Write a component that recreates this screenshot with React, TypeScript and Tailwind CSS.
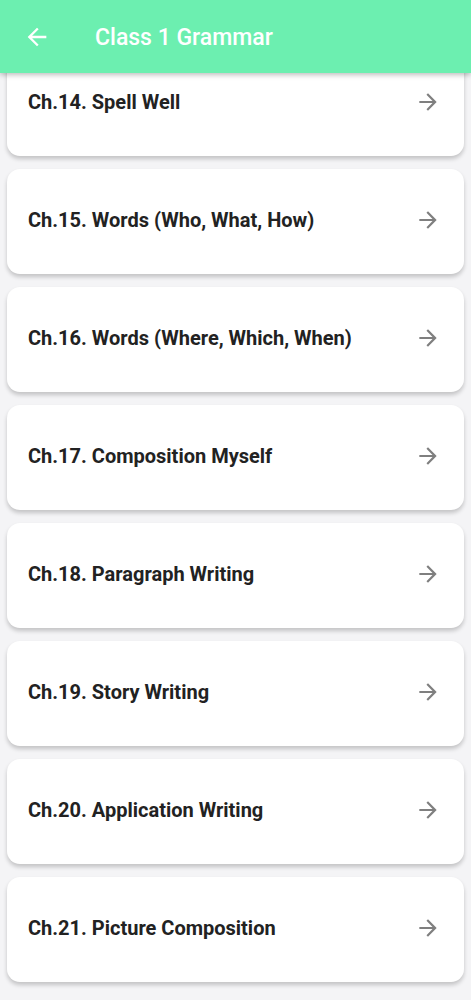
import React from "react";

const chapters = [
  "Ch.14. Spell Well",
  "Ch.15. Words (Who, What, How)",
  "Ch.16. Words (Where, Which, When)",
  "Ch.17. Composition Myself",
  "Ch.18. Paragraph Writing",
  "Ch.19. Story Writing",
  "Ch.20. Application Writing",
  "Ch.21. Picture Composition",
];

function Arrow({ className }: { className?: string }) {
  return (
    <svg viewBox="0 0 24 24" className={className} fill="currentColor">
      <path d="M12 4l-1.41 1.41L16.17 11H4v2h12.17l-5.58 5.59L12 20l8-8z" />
    </svg>
  );
}

function BackArrow({ className }: { className?: string }) {
  return (
    <svg viewBox="0 0 24 24" className={className} fill="currentColor">
      <path d="M20 11H7.83l5.59-5.59L12 4l-8 8 8 8 1.41-1.41L7.83 13H20v-2z" />
    </svg>
  );
}

export default function App() {
  return (
    <div
      className="relative w-[471px] h-[1000px] overflow-hidden bg-[#f4f4f6]"
      style={{ fontFamily: "Roboto, 'Noto Sans', sans-serif" }}
    >
      <div className="absolute top-0 left-0 right-0 z-10 h-[73px] bg-[#6cefb0] flex items-center shadow-[0_2px_5px_rgba(0,0,0,0.25)]">
        <BackArrow className="w-[28px] h-[28px] text-white ml-[23px]" />
        <span className="ml-[44px] mt-[4px] text-white text-[23px] font-medium">Class 1 Grammar</span>
      </div>
      <div className="flex flex-col gap-[13px] pt-[51px] px-[7px]">
        {chapters.map((c) => (
          <div
            key={c}
            className="h-[105px] bg-white rounded-[13px] flex items-center justify-between pl-[21px] pr-[23px] pb-[3px] shadow-[0_3px_4px_rgba(0,0,0,0.2)]"
          >
            <span className="text-[20px] font-bold text-[#222222]">{c}</span>
            <Arrow className="w-[26px] h-[26px] text-[#7f7f7f]" />
          </div>
        ))}
      </div>
    </div>
  );
}
